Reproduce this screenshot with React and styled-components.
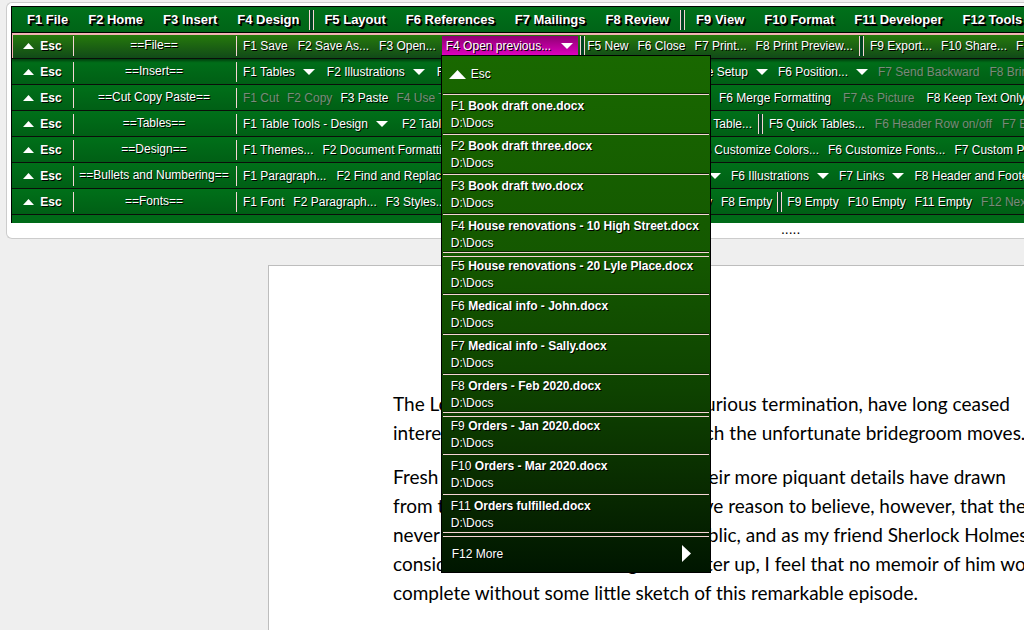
import React from "react";
import styled, { createGlobalStyle, css } from "styled-components";

const GlobalStyle = createGlobalStyle`
  * { box-sizing: border-box; }
  body {
    margin: 0;
    background: #efefef;
    font-family: "Liberation Sans", Arial, sans-serif;
    font-size: 12px;
    line-height: 16px;
    overflow: hidden;
  }
  button {
    font: inherit;
    color: inherit;
    text-shadow: inherit;
    background: none;
    border: 0;
    padding: 0;
    margin: 0;
    white-space: nowrap;
    cursor: pointer;
  }
`;

const Window = styled.div`
  display: flex;
  flex-direction: column;
  height: 100vh;
  overflow: hidden;
`;

const Ribbon = styled.header`
  flex: none;
  margin: 2px 0 0 6px;
  padding: 3px 0 0 4px;
  background: #fff;
  border: 1px solid #ccc;
  border-right: 0;
  border-radius: 6px 0 0 6px;
`;

const Bars = styled.div`
  background: #006b18;
  border: 1px solid #000;
  border-width: 1px 0 0 1px;
  padding-bottom: 8px;
  color: #fff;
  text-shadow: 1px 1px 0 #000;
`;

const Tabs = styled.nav`
  display: flex;
  align-items: center;
  gap: 20px;
  height: 26px;
  padding-left: 15px;
  border-bottom: 1px solid #000;
  background: linear-gradient(#00701a, #006417);
  font-size: 13px;
  font-weight: bold;
  text-shadow: 1px 1px 0 #000, 2px 2px 0 #000;
`;

const Divider = styled.span`
  flex: none;
  width: 5px;
  height: 20px;
  border: 1px solid #f6d5d5;
  border-width: 0 1px;
  background: #042;
  margin: 0 ${(p) => p.$margin}px;
`;

const Row = styled.div`
  display: flex;
  align-items: center;
  height: 26px;
  border-bottom: 1px solid #0a0f0a;
  background: linear-gradient(#007019, #005f15);
  ${(p) =>
    p.$active &&
    css`
      padding-bottom: 1px;
      border-top: 2px solid #f2b3b3;
      background: linear-gradient(#267a0c, #114a18);
      box-shadow: inset 1px 0 0 #f2b3b3, 0 2px 2px #0006;
      position: relative;
      z-index: 1;
    `}
`;

const EscButton = styled.button`
  display: flex;
  align-items: center;
  justify-content: center;
  gap: 6px;
  width: 61px;
  flex: none;
  font-weight: bold;
`;

const Title = styled.span`
  flex: none;
  width: 164px;
  height: 20px;
  padding: 1px 2px 0 0;
  border: 1px solid #f6d5d5;
  border-width: 0 1px;
  text-align: center;
  white-space: nowrap;
`;

const Lead = styled.div`
  display: flex;
  align-items: center;
  flex: none;
  gap: ${(p) => p.$gap}px;
  width: ${(p) => p.$width};
  padding-left: 6px;
`;

const Rest = styled.div`
  display: flex;
  align-items: center;
  gap: ${(p) => p.$gap}px;
  padding-left: ${(p) => p.$gap}px;
`;

const Command = styled.button`
  display: flex;
  align-items: center;
  gap: 8px;
  flex: none;
  ${(p) => p.$push && "margin-left: auto;"}
  &:disabled {
    color: #7a8a7b;
    text-shadow: 1px 1px 0 #0a5016;
  }
`;

const OpenCommand = styled(Command)`
  height: 20px;
  gap: 10px;
  padding: 0 5px 0 4px;
  margin-left: -4px;
  background: linear-gradient(#8f0072, #e000c0);
`;

const Anchor = styled.div`
  position: relative;
`;

const Menu = styled.ul`
  position: absolute;
  top: 19px;
  left: -5px;
  width: 270px;
  margin: 0;
  padding: 0 1px;
  list-style: none;
  border: 1px solid #000;
  background: linear-gradient(#196800, #145700 40%, #0e4200 65%, #082900 85%, #001600);
`;

const MenuItem = styled.li`
  border-bottom: ${(p) => (p.$last ? 0 : 1)}px solid #f6d5d5;
  box-shadow: ${(p) => (p.$last ? "none" : "inset 0 -1px 0 #0a2a00")};
  ${(p) =>
    p.$groupStart &&
    css`
      margin-top: 3px;
      border-top: 1px solid #f6d5d5;
    `}
`;

const FileButton = styled.button`
  display: block;
  width: 100%;
  padding: ${(p) => (p.$first ? 1 : 3)}px 8px ${(p) => (p.$short ? 0 : 2)}px;
  text-align: left;
  line-height: 17px;
`;

const MenuCommand = styled.button`
  display: flex;
  align-items: center;
  gap: 5px;
  width: 100%;
  height: ${(p) => (p.$back ? 38 : 35)}px;
  padding: 0 18px 2px ${(p) => (p.$back ? 6 : 9)}px;
  ${(p) => !p.$back && "justify-content: space-between;"}
`;

const Path = styled.span`
  display: block;
`;

const Dots = styled.div`
  height: 15px;
  padding-left: 76%;
  font-size: 14px;
  line-height: 12px;
`;

const Page = styled.main`
  flex: 1;
  min-height: 0;
  overflow: hidden;
  margin: 26px 0 0 268px;
  padding: 123px 0 0 124px;
  background: #fff;
  border: 1px solid #bdbdbd;
  border-width: 1px 0 0 1px;
  color: #000;
  font-family: Lato, Carlito, sans-serif;
  font-size: 19px;
  line-height: 29px;
`;

const Paragraph = styled.p`
  margin: 0 0 15px;
`;

const Line = styled.span`
  display: block;
  white-space: nowrap;
`;

const shapes = {
  up: [11, 6, "0,6 5.5,0 11,6"],
  bigUp: [17, 9, "0,9 8.5,0 17,9"],
  down: [12, 6, "0,0 12,0 6,6"],
  right: [9, 17, "0,0 9,8.5 0,17"],
};

function Arrow({ kind }) {
  const [w, h, points] = shapes[kind];
  return (
    <svg width={w} height={h} viewBox={`0 0 ${w} ${h}`} aria-hidden="true">
      <polygon points={points} fill="#fff" />
    </svg>
  );
}

const cmd = (label, opts = {}) => ({ label, ...opts });
const split = (margin) => ({ divider: true, margin });
const off = { disabled: true };
const drop = { arrow: true };

const tabs = [
  cmd("F1 File"), cmd("F2 Home"), cmd("F3 Insert"), cmd("F4 Design"), split(-10),
  cmd("F5 Layout"), cmd("F6 References"), cmd("F7 Mailings"), cmd("F8 Review"), split(-9),
  cmd("F9 View"), cmd("F10 Format"), cmd("F11 Developer"), cmd("F12 Tools"),
];

const rows = [
  {
    title: "Insert", lead: 531, gap: 12, restGap: 10,
    left: [cmd("F1 Tables", drop), cmd("F2 Illustrations", drop), cmd("F3 Links", drop), cmd("F5 Page Setup", { arrow: true, push: true })],
    right: [cmd("F6 Position...", drop), cmd("F7 Send Backward", off), cmd("F8 Bring Forward", off)],
  },
  {
    title: "Cut Copy Paste", lead: 470, gap: 8, restGap: 12,
    left: [cmd("F1 Cut", off), cmd("F2 Copy", off), cmd("F3 Paste"), cmd("F4 Use Theme", off)],
    right: [cmd("F6 Merge Formatting"), cmd("F7 As Picture", off), cmd("F8 Keep Text Only")],
  },
  {
    title: "Tables", lead: 515, gap: 14, restGap: 10,
    left: [cmd("F1 Table Tools - Design", drop), cmd("F2 Table", drop), cmd("F4 Table...", { push: true })],
    right: [split(-4), cmd("F5 Quick Tables..."), cmd("F6 Header Row on/off", off), cmd("F7 Banded Rows", off)],
  },
  {
    title: "Design", lead: 582, gap: 9, restGap: 9,
    left: [cmd("F1 Themes..."), cmd("F2 Document Formatting"), cmd("F5 Customize Colors...", { push: true })],
    right: [cmd("F6 Customize Fonts..."), cmd("F7 Custom Paragraph")],
  },
  {
    title: "Bullets and Numbering", lead: 484, gap: 10, restGap: 10,
    left: [cmd("F1 Paragraph..."), cmd("F2 Find and Replace"), cmd("F5 Tables", { arrow: true, push: true })],
    right: [cmd("F6 Illustrations", drop), cmd("F7 Links", drop), cmd("F8 Header and Footer")],
  },
  {
    title: "Fonts", lead: 475, gap: 9, restGap: 9,
    left: [cmd("F1 Font"), cmd("F2 Paragraph..."), cmd("F3 Styles..."), cmd("F7 Empty", { push: true })],
    right: [cmd("F8 Empty"), split(-4), cmd("F9 Empty"), cmd("F10 Empty"), cmd("F11 Empty"), cmd("F12 Next", off)],
  },
];

const files = [
  ["F1", "Book draft one.docx"],
  ["F2", "Book draft three.docx"],
  ["F3", "Book draft two.docx"],
  ["F4", "House renovations - 10 High Street.docx"],
  ["F5", "House renovations - 20 Lyle Place.docx"],
  ["F6", "Medical info - John.docx"],
  ["F7", "Medical info - Sally.docx"],
  ["F8", "Orders - Feb 2020.docx"],
  ["F9", "Orders - Jan 2020.docx"],
  ["F10", "Orders - Mar 2020.docx"],
  ["F11", "Orders fulfilled.docx"],
];

const paragraphs = [
  [
    "The Lord St. Simon marriage, and its curious termination, have long ceased",
    "interest in those exalted circles in which the unfortunate bridegroom moves.",
  ],
  [
    "Fresh scandals have eclipsed it, and their more piquant details have drawn",
    "from this four-year-old drama. As I have reason to believe, however, that the",
    "never been revealed to the general public, and as my friend Sherlock Holmes",
    "considerable share in clearing the matter up, I feel that no memoir of him would",
    "complete without some little sketch of this remarkable episode.",
  ],
];

function Commands({ items }) {
  return items.map((c, i) =>
    c.divider ? (
      <Divider key={i} $margin={c.margin} />
    ) : (
      <Command key={i} disabled={c.disabled} $push={c.push}>
        {c.label}
        {c.arrow && <Arrow kind="down" />}
      </Command>
    )
  );
}

function RowHead({ title }) {
  return (
    <>
      <EscButton>
        <Arrow kind="up" />
        Esc
      </EscButton>
      <Title>=={title}==</Title>
    </>
  );
}

function PreviousFiles() {
  return (
    <Menu>
      <MenuItem>
        <MenuCommand $back>
          <Arrow kind="bigUp" />
          Esc
        </MenuCommand>
      </MenuItem>
      {files.map(([key, name], i) => {
        const groupStart = i === 4 || i === 8;
        const groupEnd = i === 3 || i === 7 || i === 10;
        return (
          <MenuItem key={key} $groupStart={groupStart}>
            <FileButton $first={groupStart} $short={groupEnd}>
              {key} <b>{name}</b>
              <Path>D:\Docs</Path>
            </FileButton>
          </MenuItem>
        );
      })}
      <MenuItem $groupStart $last>
        <MenuCommand>
          F12 More
          <Arrow kind="right" />
        </MenuCommand>
      </MenuItem>
    </Menu>
  );
}

export default function App() {
  return (
    <Window>
      <GlobalStyle />
      <Ribbon>
        <Bars>
          <Tabs>
            <Commands items={tabs} />
          </Tabs>
          <Row $active>
            <RowHead title="File" />
            <Lead $gap={10} $width="auto">
              <Commands items={[cmd("F1 Save"), cmd("F2 Save As..."), cmd("F3 Open...")]} />
              <Anchor>
                <OpenCommand aria-expanded="true">
                  F4 Open previous...
                  <Arrow kind="down" />
                </OpenCommand>
                <PreviousFiles />
              </Anchor>
            </Lead>
            <Rest $gap={9}>
              <Commands
                items={[
                  split(-7), cmd("F5 New"), cmd("F6 Close"), cmd("F7 Print..."), cmd("F8 Print Preview..."),
                  split(-3), cmd("F9 Export..."), cmd("F10 Share..."), cmd("F11 Properties"),
                ]}
              />
            </Rest>
          </Row>
          {rows.map((r) => (
            <Row key={r.title}>
              <RowHead title={r.title} />
              <Lead $gap={r.gap} $width={`${r.lead}px`}>
                <Commands items={r.left} />
              </Lead>
              <Rest $gap={r.restGap}>
                <Commands items={r.right} />
              </Rest>
            </Row>
          ))}
        </Bars>
        <Dots>.....</Dots>
      </Ribbon>
      <Page>
        {paragraphs.map((lines, i) => (
          <Paragraph key={i}>
            {lines.map((l) => (
              <Line key={l}>{l}</Line>
            ))}
          </Paragraph>
        ))}
      </Page>
    </Window>
  );
}
